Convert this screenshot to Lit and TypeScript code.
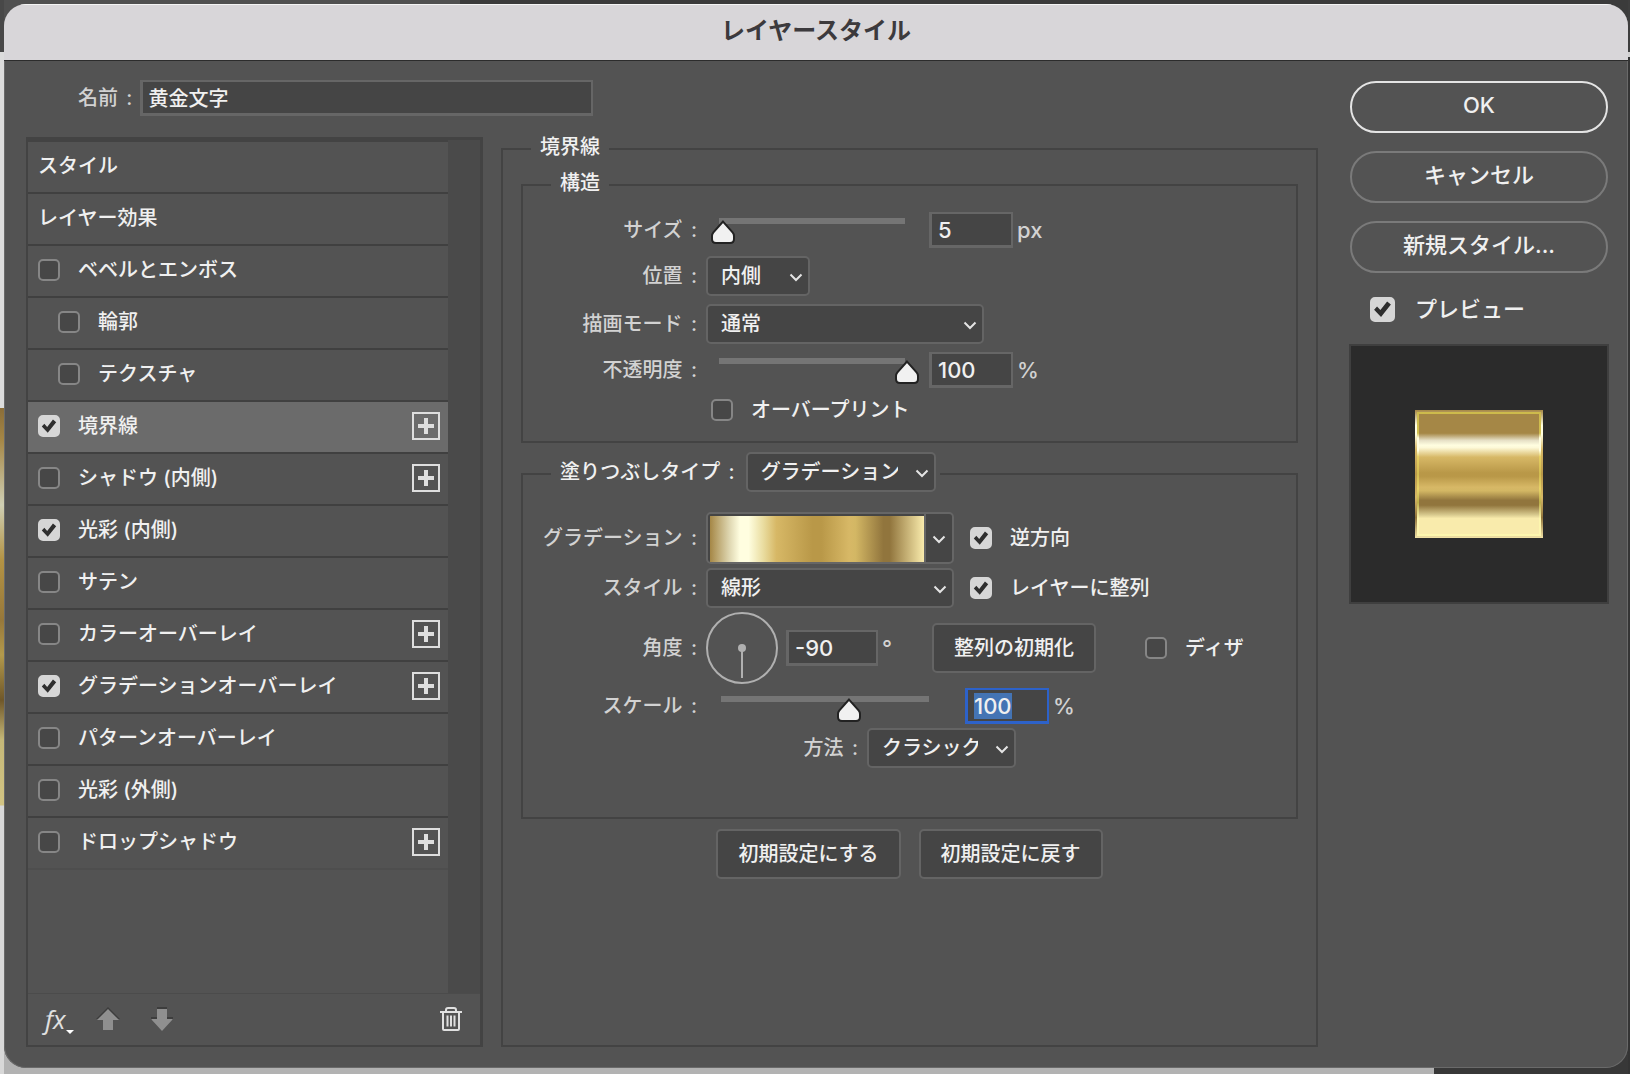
import { LitElement, html, css, svg, nothing } from "lit";
import { customElement, property, state } from "lit/decorators.js";
import { classMap } from "lit/directives/class-map.js";
import { styleMap } from "lit/directives/style-map.js";

/** Look shared by every control in the dialog. */
const controls = css`
  :host,
  * {
    box-sizing: border-box;
  }
  button,
  input,
  select {
    font: inherit;
    color: inherit;
    margin: 0;
  }
  button {
    cursor: default;
  }
  .colon {
    margin-left: 3px;
  }
  .num,
  .text {
    height: 36px;
    padding: 0 6px;
    border: solid #666;
    border-width: 2px 2px 3px 3px;
    border-radius: 0;
    background: #454545;
    color: #f0f0f0;
    outline: none;
  }
  .num {
    width: 84px;
    font-size: 22px;
  }
  .num.angle {
    width: 92px;
  }
  .num:focus {
    border-color: #2d62c9;
  }
  .num::selection {
    background: #4474b4;
    color: #f0f0f0;
  }
  .box {
    appearance: none;
    flex: none;
    display: grid;
    width: 22px;
    height: 22px;
    border: 2px solid #868686;
    border-radius: 5px;
    background: #474747;
  }
  .box:checked {
    border-color: #d6d6d6;
    background: #d6d6d6;
  }
  .box:checked::before {
    content: "";
    background: #2e2e2e;
    clip-path: polygon(10% 53%, 24% 38%, 40% 55%, 72% 14%, 90% 29%, 43% 88%);
  }
  .check {
    display: inline-flex;
    align-items: center;
    gap: 18px;
    white-space: nowrap;
  }
  .button {
    height: 50px;
    padding: 0 20px;
    border: 2px solid #646464;
    border-radius: 5px;
    background: #454545;
    color: #f0f0f0;
    white-space: nowrap;
  }
`;

const colon = html`<span class="colon">:</span>`;

const chevron = svg`<path d="M1.5 1.5 7 7l5.5-5.5" fill="none" stroke="#e4e4e4" stroke-width="2" />`;

/** Drop-down with the flat dark frame and a chevron at its right. */
@customElement("ls-select")
export class LsSelect extends LitElement {
  @property() label = "";
  @property() value = "";
  @property({ type: Array }) options: string[] = [];

  static styles = [
    controls,
    css`
      :host {
        display: inline-grid;
        align-items: center;
      }
      select,
      svg {
        grid-area: 1 / 1;
      }
      select {
        appearance: none;
        width: 100%;
        height: 40px;
        padding: 0 36px 0 13px;
        border: 2px solid #646464;
        border-radius: 5px;
        background: #454545;
        color: #f0f0f0;
        outline: none;
      }
      svg {
        justify-self: end;
        width: 14px;
        height: 9px;
        margin: 3px 7px 0 0;
        pointer-events: none;
      }
    `,
  ];

  render() {
    return html`
      <select aria-label=${this.label}>
        ${this.options.map(
          (o) => html`<option ?selected=${o === this.value}>${o}</option>`,
        )}
      </select>
      <svg viewBox="0 0 14 9" aria-hidden="true">${chevron}</svg>
    `;
  }
}

/** Slider whose pointer hangs below a thin track. */
@customElement("ls-slider")
export class LsSlider extends LitElement {
  @property() label = "";
  @property({ type: Number }) min = 0;
  @property({ type: Number }) max = 100;
  @property({ type: Number }) value = 0;

  static styles = css`
    :host {
      display: block;
      position: relative;
      height: 24px;
    }
    input {
      appearance: none;
      display: block;
      width: 100%;
      height: 24px;
      margin: 0;
      outline: none;
      background: linear-gradient(#757575, #757575) no-repeat 8px 0 /
        calc(100% - 22px) 6px;
    }
    input::-webkit-slider-thumb {
      appearance: none;
      width: 24px;
      height: 24px;
      background: transparent;
    }
    .rail {
      position: absolute;
      inset: 2px 24px 0 0;
      pointer-events: none;
    }
    svg {
      position: absolute;
      width: 24px;
      height: 24px;
    }
  `;

  render() {
    const pos = ((this.value - this.min) / (this.max - this.min)) * 100;
    return html`
      <input
        type="range"
        aria-label=${this.label}
        min=${this.min}
        max=${this.max}
        .value=${String(this.value)}
        @input=${(e: Event) =>
          (this.value = Number((e.target as HTMLInputElement).value))}
      />
      <div class="rail">
        <svg viewBox="0 0 24 24" style=${styleMap({ left: `${pos}%` })}>
          <path
            d="M12 1.6 21.6 12.4Q23 14 23 16V19Q23 23 19 23H5Q1 23 1 19V16Q1 14 2.4 12.4Z"
            fill="#f1f1f1"
            stroke="#222"
            stroke-width="2"
          />
        </svg>
      </div>
    `;
  }
}

interface Effect {
  name: string;
  checkable?: boolean;
  on?: boolean;
  nested?: boolean;
  addable?: boolean;
}

const EFFECTS: Effect[] = [
  { name: "スタイル" },
  { name: "レイヤー効果" },
  { name: "ベベルとエンボス", checkable: true },
  { name: "輪郭", checkable: true, nested: true },
  { name: "テクスチャ", checkable: true, nested: true },
  { name: "境界線", checkable: true, on: true, addable: true },
  { name: "シャドウ (内側)", checkable: true, addable: true },
  { name: "光彩 (内側)", checkable: true, on: true },
  { name: "サテン", checkable: true },
  { name: "カラーオーバーレイ", checkable: true, addable: true },
  { name: "グラデーションオーバーレイ", checkable: true, on: true, addable: true },
  { name: "パターンオーバーレイ", checkable: true },
  { name: "光彩 (外側)", checkable: true },
  { name: "ドロップシャドウ", checkable: true, addable: true },
];

/** Left column: the list of effects with its toolbar. */
@customElement("ls-effects")
export class LsEffects extends LitElement {
  @state() private selected = "境界線";

  static styles = [
    controls,
    css`
      :host {
        display: flex;
        flex-direction: column;
        border: solid #434343;
        border-width: 3px 3px 2px 2px;
      }
      .scroll {
        flex: 1;
        display: flex;
        background: #4a4a4a;
      }
      ul {
        flex: 1;
        margin: 0 32px 0 0;
        padding: 0;
        list-style: none;
        border-top: 2px solid #434343;
        background: #535353;
      }
      li {
        display: flex;
        align-items: center;
        height: 52px;
        padding: 0 8px 2px 10px;
        border-bottom: 2px solid #404040;
      }
      li:last-child {
        border-bottom-color: #4e4e4e;
      }
      li.nested {
        padding-left: 30px;
      }
      li.selected {
        background: #6b6b6b;
      }
      li > span,
      .check {
        flex: 1;
      }
      .plus {
        flex: none;
        display: grid;
        place-items: center;
        width: 28px;
        height: 28px;
        padding: 0;
        border: 2px solid #dedede;
        background: none;
      }
      .plus svg {
        width: 16px;
        height: 16px;
      }
      footer {
        display: flex;
        align-items: center;
        gap: 30px;
        height: 52px;
        padding: 0 17px 2px;
        border-top: 1px solid #4b4b4b;
      }
      .tool {
        display: grid;
        place-items: center;
        padding: 0;
        border: 0;
        background: none;
      }
      .tool svg {
        display: block;
      }
      .fx {
        grid-template-columns: auto auto;
        align-items: end;
        margin-right: -8px;
      }
      .fx i {
        font: italic 26px/30px "Open Sans", sans-serif;
        color: #e0e0e0;
      }
      .trash {
        margin-left: auto;
      }
    `,
  ];

  private row(e: Effect) {
    return html`
      <li
        class=${classMap({
          nested: !!e.nested,
          selected: e.name === this.selected,
        })}
        @click=${() => (this.selected = e.name)}
      >
        ${e.checkable
          ? html`<label class="check"
              ><input class="box" type="checkbox" ?checked=${e.on} />${e.name}</label
            >`
          : html`<span>${e.name}</span>`}
        ${e.addable
          ? html`<button class="plus" aria-label="追加">
              <svg viewBox="0 0 16 16">
                <path d="M6 0h4v6h6v4h-6v6H6v-6H0V6h6z" fill="#dedede" />
              </svg>
            </button>`
          : nothing}
      </li>
    `;
  }

  render() {
    return html`
      <div class="scroll">
        <ul>
          ${EFFECTS.map((e) => this.row(e))}
        </ul>
      </div>
      <footer>
        <button class="tool fx" aria-label="効果を追加">
          <i>fx</i>
          <svg width="8" height="4" viewBox="0 0 8 4">
            <path d="M0 0h8L4 4z" fill="#fff" />
          </svg>
        </button>
        <button class="tool" aria-label="上へ">
          <svg width="24" height="24" viewBox="0 0 24 24">
            <path d="M12 0 24 12h-7v10H7V12H0z" fill="#3d3d3d" />
            <path d="M12 2 23 13h-6v10H7V13H1z" fill="#8f8f8f" />
          </svg>
        </button>
        <button class="tool" aria-label="下へ">
          <svg width="24" height="24" viewBox="0 0 24 24">
            <path d="M7 0h10v10h6v3H1v-3h6z" fill="#3d3d3d" />
            <path d="M7 2h10v10h6L12 24 1 12h6z" fill="#8f8f8f" />
          </svg>
        </button>
        <button class="tool trash" aria-label="削除">
          <svg width="24" height="24" viewBox="0 0 24 24">
            <path
              d="M1 5h22M7 4.5V3q0-2 2-2h6q2 0 2 2v1.5M4 5v17q0 1 1 1h14q1 0 1-1V5M8.500 8.500v11M12 8.500v11M15.500 8.500v11"
              fill="none"
              stroke="#e0e0e0"
              stroke-width="2"
            />
          </svg>
        </button>
      </footer>
    `;
  }
}

/** Middle column: settings of the stroke effect. */
@customElement("ls-stroke")
export class LsStroke extends LitElement {
  static styles = [
    controls,
    css`
      :host {
        display: flex;
        --label: 174px;
      }
      fieldset {
        min-width: 0;
        margin: 0;
        border: 2px solid #434343;
      }
      .outer {
        flex: 1;
        padding: 2px 18px 0;
      }
      legend {
        display: flex;
        align-items: center;
        gap: 11px;
        height: 34px;
        margin-left: 28px;
        padding: 0 9px 4px;
      }
      .outer > legend {
        margin-left: 10px;
      }
      .structure {
        padding: 10px 0 17px;
      }
      .fill {
        margin-top: 8px;
        padding: 15px 0 49px;
      }
      .fill > legend {
        height: 46px;
        padding-right: 4px;
      }
      .rows {
        display: flex;
        flex-direction: column;
        gap: 8px;
      }
      .fill .rows {
        gap: 4px;
      }
      .row {
        display: flex;
        align-items: center;
      }
      .label {
        flex: none;
        width: var(--label);
        margin-right: 9px;
        text-align: right;
        color: #d2d2d2;
        white-space: nowrap;
      }
      .label.wide {
        width: 335px;
      }
      .unit {
        margin-left: 4px;
        font-size: 22px;
        color: #d2d2d2;
      }
      .slider {
        width: 208px;
        margin: 0 10px 0 5px;
      }
      .slider.scale {
        width: 230px;
        margin: 4px 22px 0 7px;
      }
      .narrow {
        width: 104px;
      }
      .wide-select {
        width: 278px;
      }
      .type {
        width: 190px;
      }
      .medium {
        width: 248px;
      }
      .method {
        width: 149px;
      }
      .overprint {
        height: 28px;
        padding-left: calc(var(--label) + 14px);
      }
      .after {
        margin-left: 16px;
      }
      .gradient {
        display: flex;
        width: 248px;
        height: 52px;
        padding: 0;
        border: 2px solid #666;
        border-radius: 5px;
        background: #454545;
      }
      .swatch {
        flex: 1;
        align-self: stretch;
        margin: 2px 0 0 2px;
        background: linear-gradient(
          90deg,
          #a58746 0%,
          #ded6b0 9%,
          #fffee0 14%,
          #fffee0 18%,
          #e9dc9f 25%,
          #d7b866 31%,
          #b99848 48%,
          #b99848 52%,
          #d7b866 65%,
          #d3b764 68%,
          #91753d 81%,
          #91753d 84%,
          #f9ebac 100%
        );
      }
      .drop {
        flex: none;
        display: grid;
        place-items: center;
        align-self: stretch;
        width: 28px;
        padding-top: 2px;
        border-left: 2px solid #666;
      }
      .dial {
        flex: none;
        display: block;
        width: 72px;
        height: 72px;
        margin-right: 8px;
      }
      .reset {
        margin: 0 49px 0 40px;
      }
      .actions {
        display: flex;
        justify-content: center;
        gap: 18px;
        padding-top: 10px;
      }
    `,
  ];

  firstUpdated() {
    const scale = this.renderRoot.querySelector<HTMLInputElement>("#scale");
    scale?.focus({ preventScroll: true });
    scale?.select();
  }

  render() {
    return html`
      <fieldset class="outer">
        <legend>境界線</legend>

        <fieldset class="structure">
          <legend>構造</legend>
          <div class="rows">
            <div class="row">
              <label class="label" for="size">サイズ ${colon}</label>
              <ls-slider class="slider" label="サイズ" min="0" max="250" value="0"></ls-slider>
              <input class="num" id="size" value="5" />
              <span class="unit">px</span>
            </div>
            <div class="row">
              <span class="label">位置 ${colon}</span>
              <ls-select
                class="narrow"
                label="位置"
                value="内側"
                .options=${["外側", "内側", "中央"]}
              ></ls-select>
            </div>
            <div class="row">
              <span class="label">描画モード ${colon}</span>
              <ls-select
                class="wide-select"
                label="描画モード"
                value="通常"
                .options=${["通常", "乗算", "スクリーン"]}
              ></ls-select>
            </div>
            <div class="row">
              <label class="label" for="opacity">不透明度 ${colon}</label>
              <ls-slider class="slider" label="不透明度" value="100"></ls-slider>
              <input class="num" id="opacity" value="100" />
              <span class="unit">%</span>
            </div>
            <div class="row overprint">
              <label class="check"
                ><input class="box" type="checkbox" />オーバープリント</label
              >
            </div>
          </div>
        </fieldset>

        <fieldset class="fill">
          <legend>
            <span>塗りつぶしタイプ ${colon}</span>
            <ls-select
              class="type"
              label="塗りつぶしタイプ"
              value="グラデーション"
              .options=${["カラー", "グラデーション", "パターン"]}
            ></ls-select>
          </legend>
          <div class="rows">
            <div class="row">
              <span class="label">グラデーション ${colon}</span>
              <button class="gradient" aria-label="グラデーション">
                <span class="swatch"></span>
                <span class="drop">
                  <svg width="14" height="9" viewBox="0 0 14 9">${chevron}</svg>
                </span>
              </button>
              <label class="check after"
                ><input class="box" type="checkbox" checked />逆方向</label
              >
            </div>
            <div class="row">
              <span class="label">スタイル ${colon}</span>
              <ls-select
                class="medium"
                label="スタイル"
                value="線形"
                .options=${["線形", "円形", "角度"]}
              ></ls-select>
              <label class="check after"
                ><input class="box" type="checkbox" checked />レイヤーに整列</label
              >
            </div>
            <div class="row">
              <label class="label" for="angle">角度 ${colon}</label>
              <svg class="dial" viewBox="0 0 72 72" aria-hidden="true">
                <circle cx="36" cy="36" r="35" fill="none" stroke="#b0b0b0" stroke-width="2" />
                <path d="M36 36v30" stroke="#b0b0b0" stroke-width="2" />
                <circle cx="36" cy="36" r="4" fill="#b0b0b0" />
              </svg>
              <input class="num angle" id="angle" value="-90" />
              <span class="unit">°</span>
              <button class="button reset">整列の初期化</button>
              <label class="check"><input class="box" type="checkbox" />ディザ</label>
            </div>
            <div class="row">
              <label class="label" for="scale">スケール ${colon}</label>
              <ls-slider
                class="slider scale"
                label="スケール"
                min="10"
                max="160"
                value="100"
              ></ls-slider>
              <input class="num" id="scale" value="100" />
              <span class="unit">%</span>
            </div>
            <div class="row">
              <span class="label wide">方法 ${colon}</span>
              <ls-select
                class="method"
                label="方法"
                value="クラシック"
                .options=${["知覚的", "リニア", "クラシック"]}
              ></ls-select>
            </div>
          </div>
        </fieldset>

        <div class="actions">
          <button class="button">初期設定にする</button>
          <button class="button">初期設定に戻す</button>
        </div>
      </fieldset>
    `;
  }
}

/** Right column: dialog buttons and the preview tile. */
@customElement("ls-side")
export class LsSide extends LitElement {
  static styles = [
    controls,
    css`
      :host {
        display: flex;
        flex-direction: column;
        gap: 18px;
        font-size: 22px;
      }
      .pill {
        height: 52px;
        margin: 0 1px;
        padding: 0 0 4px;
        border: 2px solid #7a7a7a;
        border-radius: 26px;
        background: none;
        color: #f0f0f0;
      }
      .pill.primary {
        border-color: #e4e4e4;
      }
      .check {
        gap: 20px;
        height: 36px;
        padding-left: 21px;
      }
      .box {
        width: 25px;
        height: 25px;
      }
      .preview {
        display: grid;
        place-items: center;
        aspect-ratio: 1;
        margin-top: -1px;
        border: 2px solid #3f3f3f;
        background: #2b2b2b;
      }
      .edge {
        width: 50%;
        aspect-ratio: 1;
        padding: 2px;
        background: linear-gradient(
          #a58746 0%,
          #fffee0 12%,
          #fffee0 19%,
          #d7b866 31%,
          #b99848 50%,
          #d7b866 68%,
          #91753d 84%,
          #f1e2a6 100%
        );
      }
      .glow {
        height: 100%;
        padding: 2px;
        background: linear-gradient(
          #cdbb4c 0%,
          #d2bf50 17%,
          #fffee0 21%,
          #fffee0 31%,
          #e6cf62 36%,
          #d2bc50 50%,
          #e8d468 62%,
          #bcae4a 73%,
          #fdf6ae 86%
        );
      }
      .gold {
        height: 100%;
        background: linear-gradient(
          #a58746 0%,
          #a58746 16%,
          #e6e0c6 22%,
          #fffee0 26%,
          #fdf9d8 28%,
          #d7b866 36%,
          #b99848 49%,
          #b99848 52%,
          #d7b866 61%,
          #d3b764 64%,
          #91753d 72%,
          #91753d 76%,
          #d8c98e 84%,
          #f9ebac 87%
        );
      }
    `,
  ];

  render() {
    return html`
      <button class="pill primary">OK</button>
      <button class="pill">キャンセル</button>
      <button class="pill">新規スタイル...</button>
      <label class="check"><input class="box" type="checkbox" checked />プレビュー</label>
      <div class="preview">
        <div class="edge"><div class="glow"><div class="gold"></div></div></div>
      </div>
    `;
  }
}

@customElement("app-root")
export class AppRoot extends LitElement {
  static styles = [
    controls,
    css`
      :host {
        display: flex;
        min-height: 100vh;
        padding: 4px 2px 6px 4px;
        font: 500 20px/28px Inter, "Noto Sans CJK JP", sans-serif;
        color: #f0f0f0;
        /* Slivers of the editor that stay visible round the dialog. */
        background:
          linear-gradient(
              #484848 52px,
              #dcdcdc 52px 408px,
              #8a6d38 408px,
              #a58746 440px,
              #cfcfb4 505px,
              #b39344 560px,
              #97783a 620px,
              #b39a4c 655px,
              #6f5729 700px,
              #c5b878 740px,
              #d2c483 805px,
              #d8d8d8 806px
            )
            no-repeat 0 0 / 4px 100%,
          linear-gradient(#3e3e3e 52px, #d0d0d0 52px 57px, #343434 57px) no-repeat 100%
            0 / 2px 100%,
          linear-gradient(90deg, #505050 460px, #3b3b3b 460px) no-repeat 0 0 / 100%
            30px,
          linear-gradient(90deg, #b2b2b2 88%, #383838 88%);
      }
      .dialog {
        flex: 1;
        display: flex;
        flex-direction: column;
        overflow: hidden;
        border-radius: 22px;
        background: #535353;
        box-shadow: inset 0 0 0 1px #6a6a6a;
      }
      header {
        height: 57px;
        padding: 13px 0;
        border-bottom: 1px solid #2c2c2c;
        background: #d8d6d9;
        box-shadow: inset 0 1px #f4f4f4;
        text-align: center;
      }
      h1 {
        margin: 0;
        font-size: 24px;
        line-height: 28px;
        font-weight: 700;
        color: #3c3a3d;
      }
      main {
        flex: 1;
        display: flex;
        gap: 31px;
        padding: 19px 19px 21px 22px;
      }
      .left {
        flex: 1;
        display: flex;
        flex-direction: column;
        gap: 16px;
      }
      .name {
        display: flex;
        align-items: center;
        gap: 8px;
        padding-left: 52px;
      }
      .name label {
        color: #d2d2d2;
      }
      .text {
        width: 453px;
        padding-left: 5px;
      }
      .columns {
        flex: 1;
        display: grid;
        grid-template-columns: minmax(0, 457fr) minmax(0, 817fr);
        gap: 18px;
      }
      ls-effects {
        margin-top: 5px;
      }
      ls-side {
        flex: 0 0 260px;
        padding-top: 1px;
      }
    `,
  ];

  render() {
    return html`
      <div class="dialog" role="dialog" aria-labelledby="title">
        <header><h1 id="title">レイヤースタイル</h1></header>
        <main>
          <div class="left">
            <div class="name">
              <label for="name">名前 ${colon}</label>
              <input class="text" id="name" value="黄金文字" />
            </div>
            <div class="columns">
              <ls-effects></ls-effects>
              <ls-stroke></ls-stroke>
            </div>
          </div>
          <ls-side></ls-side>
        </main>
      </div>
    `;
  }
}
